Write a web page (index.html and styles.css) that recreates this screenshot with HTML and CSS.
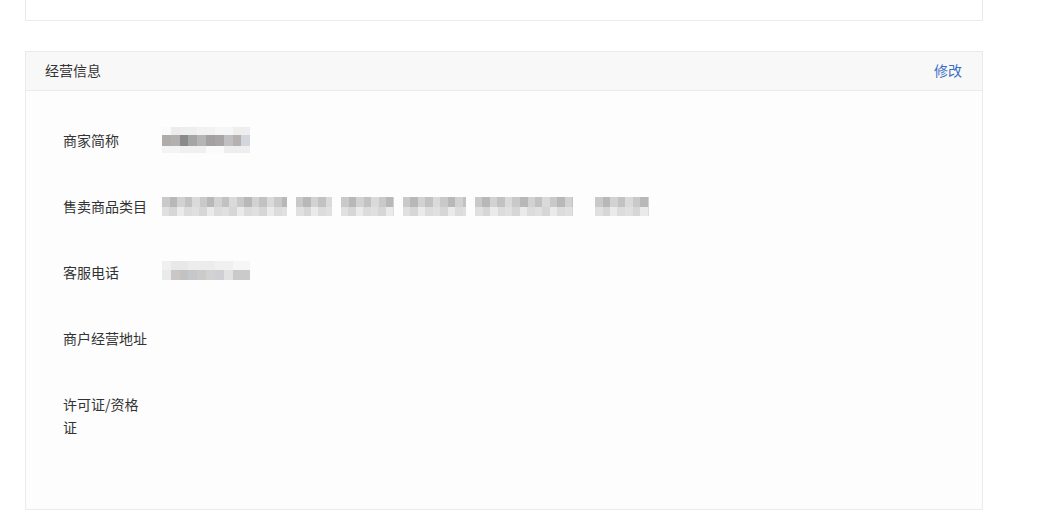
FILE: index.html
```html
<!DOCTYPE html>
<html lang="zh-CN">
<head>
<meta charset="utf-8">
<title>经营信息</title>
<link rel="stylesheet" href="styles.css">
</head>
<body>
<div class="page">
  <div class="card card-top"></div>
  <div class="card card-main">
    <div class="card-head">
      <span class="card-title">经营信息</span>
      <a class="card-action" href="#">修改</a>
    </div>
    <div class="card-body">
      <div class="row">
        <div class="label">商家简称</div>
        <div class="value"><span class="mosaic mosaic-name"></span></div>
      </div>
      <div class="row">
        <div class="label">售卖商品类目</div>
        <div class="value seg-list">
          <span class="mosaic seg seg-a"></span>
          <span class="mosaic seg seg-b"></span>
          <span class="mosaic seg seg-c"></span>
          <span class="mosaic seg seg-d"></span>
          <span class="mosaic seg seg-e"></span>
          <span class="mosaic seg seg-f"></span>
        </div>
      </div>
      <div class="row">
        <div class="label">客服电话</div>
        <div class="value"><span class="mosaic mosaic-phone"></span></div>
      </div>
      <div class="row">
        <div class="label">商户经营地址</div>
        <div class="value"></div>
      </div>
      <div class="row">
        <div class="label">许可证/资格证</div>
        <div class="value"></div>
      </div>
    </div>
  </div>
</div>
</body>
</html>
```

FILE: styles.css
```css
* { box-sizing: border-box; }
html, body { margin: 0; padding: 0; background: #fff; }
body {
  font-family: "Microsoft YaHei", "Noto Sans CJK SC", "Noto Sans", sans-serif;
  font-size: 14px;
  color: #333;
}
.page {
  padding-left: 25px;
  width: 983px;
}
.card {
  border: 1px solid #ebebeb;
  background: #fff;
}
.card-top {
  height: 21px;
  border-top: none;
}
.card-main {
  margin-top: 30px;
  background: #fdfdfd;
}
.card-head {
  height: 39px;
  background: #f8f8f8;
  border-bottom: 1px solid #ebebeb;
  display: flex;
  align-items: center;
  justify-content: space-between;
  padding: 0 20px 2px 19px;
  line-height: 22px;
}
.card-title { color: #333; }
.card-action {
  color: #3b70c4;
  text-decoration: none;
}
.card-body {
  padding: 38px 0 70px 37px;
}
.row {
  display: flex;
  align-items: flex-start;
  line-height: 23px;
  margin-bottom: 43px;
}
.row:last-child { margin-bottom: 0; }
.label {
  width: 99px;
  padding-right: 13px;
  color: #333;
  flex: none;
}
.value {
  flex: 1;
  height: 23px;
}
.mosaic {
  display: inline-block;
  vertical-align: top;
}
.mosaic-name {
  width: 88px;
  height: 26px;
  margin-top: -2px;
  background:
    linear-gradient(to right, #b0acab 0 9px, #b3b0ae 9px 18px, #8a8a8a 18px 26px, #a5a5a5 26px 35px, #b5b5b5 35px 44px, #a3a1a1 44px 53px, #a7a5a6 53px 62px, #c0c0c2 62px 71px, #b5b1b0 71px 79px, #d3d6dc 79px 88px) 0 8px / 88px 11px no-repeat,
    linear-gradient(to right, #fafafa 0 9px, #ececec 9px 18px, #eeeeee 18px 35px, #f2f2f2 35px 53px, #f6f6f6 53px 71px, #eeeeee 71px 88px) 0 0 / 88px 8px no-repeat,
    linear-gradient(to right, #f4f4f4 0 18px, #f0f0f0 18px 44px, #fbfbfb 44px 62px, #eeeeee 62px 88px) 0 19px / 88px 7px no-repeat;
}
.mosaic-phone {
  width: 88px;
  height: 19px;
  margin-top: 0;
  background:
    linear-gradient(to right, #f0f0f0 0 9px, #e8e8e8 9px 26px, #ececec 26px 53px, #f0f0f0 53px 71px, #f6f6f6 71px 88px) 0 0 / 88px 9px no-repeat,
    linear-gradient(to right, #eaeaea 0 9px, #c9c6c5 9px 18px, #c2c2c2 18px 26px, #c6c7cb 26px 35px, #cbcbcb 35px 44px, #d2d2d2 44px 53px, #cfd0d3 53px 62px, #e2e2e2 62px 71px, #cacaca 71px 88px) 0 9px / 88px 10px no-repeat;
}
.seg-list {
  display: flex;
  align-items: flex-start;
  gap: 9px;
}
.seg {
  height: 19px;
  margin-top: 2px;
  background:
    repeating-linear-gradient(to right, #c9c9c9 0 7.5px, #b8b8b8 7.5px 15px, #d2d2d2 15px 22.5px, #c2c2c4 22.5px 30px, #dadada 30px 37.5px) 0 0 / 100% 10px no-repeat,
    repeating-linear-gradient(to right, #e0e0e0 0 7.5px, #d6d6d6 7.5px 15px, #eaeaea 15px 22.5px, #dcdcde 22.5px 30px) 0 10px / 100% 9px no-repeat;
}
.seg-a { width: 125px; }
.seg-b { width: 36px; }
.seg-c { width: 53px; }
.seg-d { width: 63px; }
.seg-e { width: 98px; }
.seg-f { width: 54px; margin-left: 13px; }
```
